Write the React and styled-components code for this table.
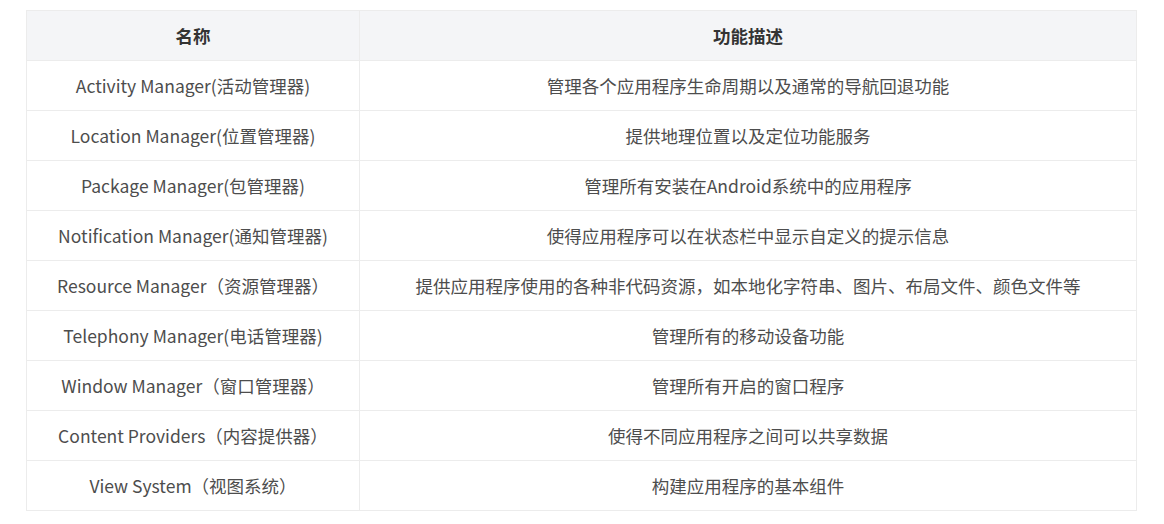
import styled, { createGlobalStyle } from "styled-components";

const GlobalStyles = createGlobalStyle`
  body {
    margin: 0;
    background: #fff;
    font-family: "Noto Sans CJK SC", "Noto Sans", sans-serif;
  }
`;

const rows = [
  ["Activity Manager(活动管理器)", "管理各个应用程序生命周期以及通常的导航回退功能"],
  ["Location Manager(位置管理器)", "提供地理位置以及定位功能服务"],
  ["Package Manager(包管理器)", "管理所有安装在Android系统中的应用程序"],
  ["Notification Manager(通知管理器)", "使得应用程序可以在状态栏中显示自定义的提示信息"],
  ["Resource Manager（资源管理器）", "提供应用程序使用的各种非代码资源，如本地化字符串、图片、布局文件、颜色文件等"],
  ["Telephony Manager(电话管理器)", "管理所有的移动设备功能"],
  ["Window Manager（窗口管理器）", "管理所有开启的窗口程序"],
  ["Content Providers（内容提供器）", "使得不同应用程序之间可以共享数据"],
  ["View System（视图系统）", "构建应用程序的基本组件"],
];

const App = () => {
  return (
    <Page>
      <GlobalStyles />
      <Table>
        <colgroup>
          <col style={{ width: 333 }} />
          <col />
        </colgroup>
        <thead>
          <tr>
            <Head>名称</Head>
            <Head>功能描述</Head>
          </tr>
        </thead>
        <tbody>
          {rows.map(([name, desc]) => (
            <tr key={name}>
              <Cell>{name}</Cell>
              <Cell>{desc}</Cell>
            </tr>
          ))}
        </tbody>
      </Table>
    </Page>
  );
};

export default App;

const Page = styled.div`
  padding: 10px 26px 0 26px;
  width: 1111px;
`;

const Table = styled.table`
  width: 1111px;
  border-collapse: collapse;
  table-layout: fixed;
  color: #4d4d4d;
  font-size: 17.5px;
`;

const Head = styled.th`
  height: 50px;
  padding: 0 10px;
  box-sizing: border-box;
  background: #f4f5f7;
  border: 1px solid #ececec;
  color: #333;
  font-weight: 700;
  text-align: center;
  vertical-align: middle;
`;

const Cell = styled.td`
  height: 50px;
  padding: 0 10px;
  box-sizing: border-box;
  border: 1px solid #ececec;
  text-align: center;
  vertical-align: middle;
  white-space: nowrap;
`;
